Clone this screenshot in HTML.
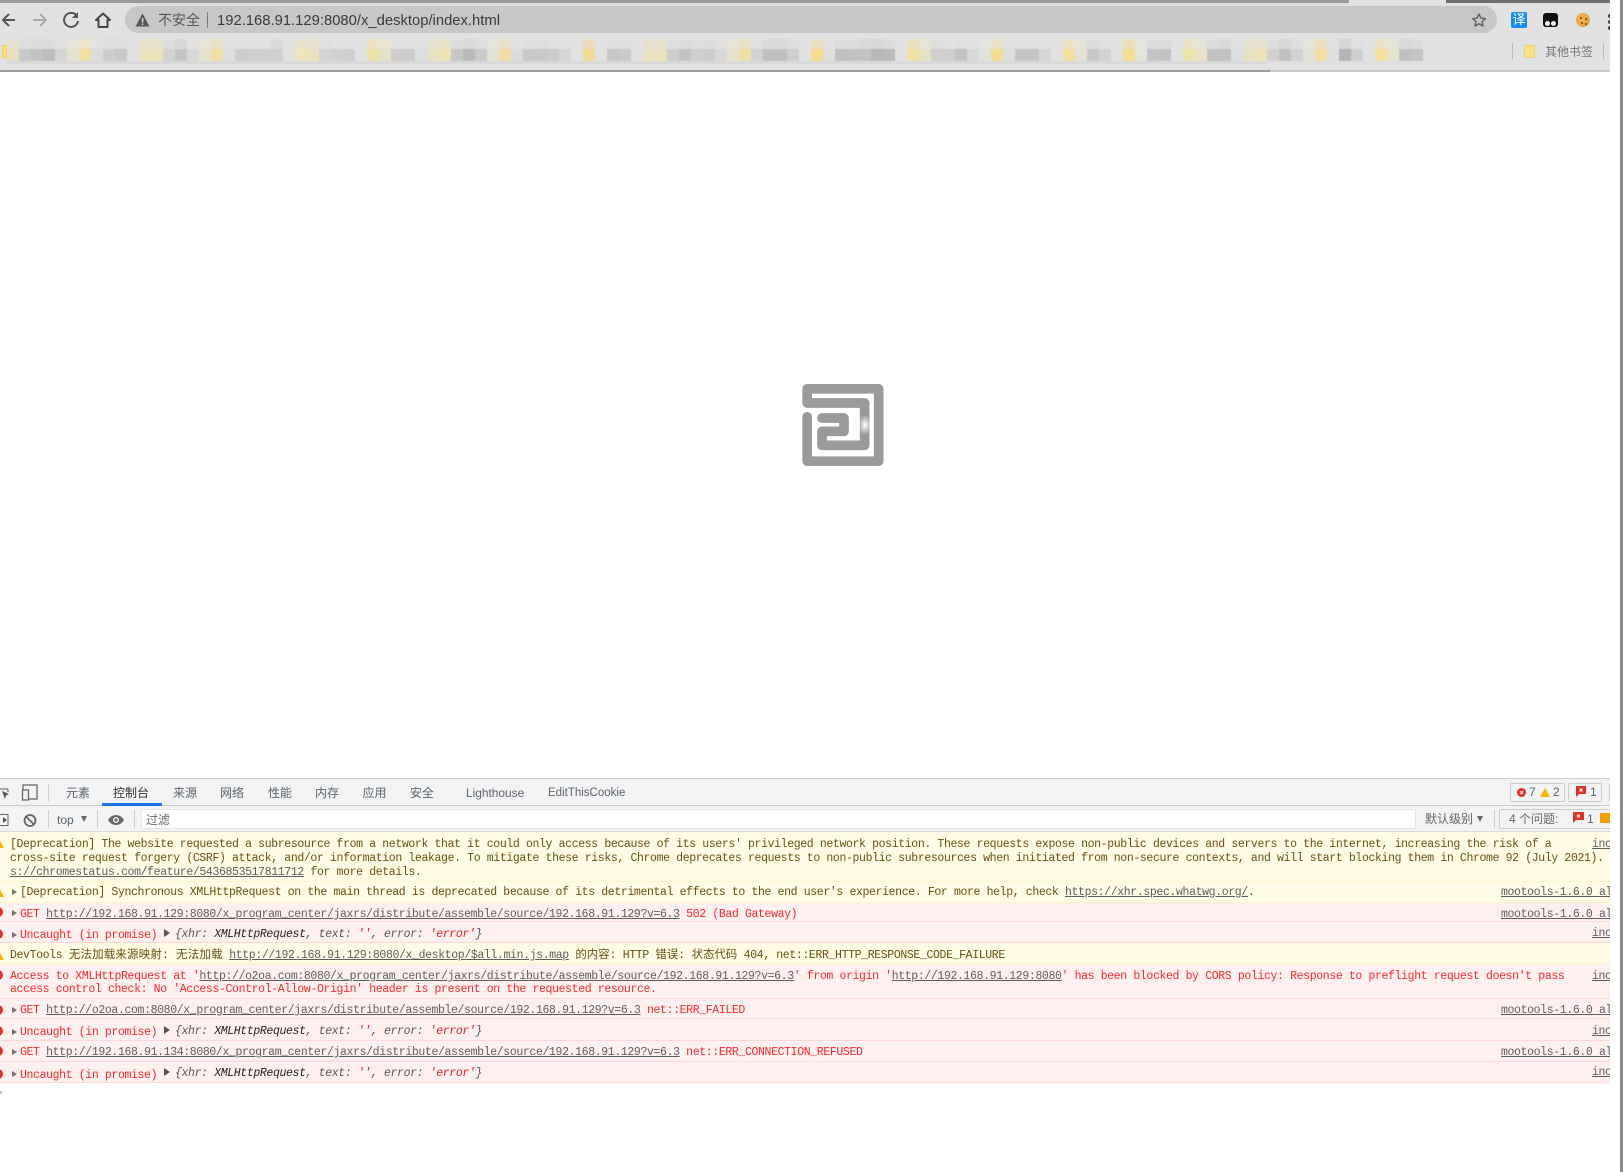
<!DOCTYPE html>
<html><head><meta charset="utf-8"><title>Console</title>
<style>
html,body{margin:0;padding:0;width:1623px;height:1172px;overflow:hidden;background:#fff}
body{position:relative;font-family:"Liberation Sans","Noto Sans CJK SC",sans-serif}
.a{position:absolute;white-space:nowrap}
.m{position:absolute;left:7px;display:flex;filter:blur(.4px)}
.m i{display:block;width:12px;height:100%;flex:none}
#wrap{position:absolute;left:0;top:0;width:1610px;height:1172px;overflow:hidden}
.r{position:absolute;left:0;width:1610px;box-sizing:border-box}
.w{background:#fffbe5;border-bottom:1px solid #fff3c4}
.e{background:#fff0f0;border-bottom:1px solid #ffd6d6}
.t{position:absolute;white-space:pre;font-family:"Liberation Mono","Noto Sans CJK SC",monospace;font-size:11.5px;letter-spacing:-.37px;line-height:14px;filter:blur(.3px)}
.y{color:#6a5010}.d{color:#f52a2a}
u{color:#5e5e5e}
.tab{position:absolute;top:785px;font-size:12px;line-height:16px;color:#5f6368;white-space:nowrap;filter:blur(.2px)}
.ar{position:absolute;width:0;height:0;border-left:5px solid #727272;border-top:3.5px solid transparent;border-bottom:3.5px solid transparent}
.ob{border-left:6px solid #555;border-top:4px solid transparent;border-bottom:4px solid transparent}
.i{font-style:italic;color:#555}.i b{font-weight:normal;color:#222}.i s{text-decoration:none;color:#e02020}
.c{position:absolute;width:10px;height:10px;border-radius:50%;background:#e0302a;left:-7px}
.tr{position:absolute;left:-6px;width:0;height:0;border-left:5px solid transparent;border-right:5px solid transparent;border-bottom:9px solid #f2b600}
</style></head><body>
<div id="wrap">
<!-- chrome -->
<div class="a" style="left:0;top:0;width:1610px;height:72px;background:#e2e2e2"></div>
<div class="a" style="left:0;top:0;width:1349px;height:3px;background:#9a9a9a"></div>
<div class="a" style="left:1446px;top:0;width:164px;height:3px;background:#6e6e6e"></div>
<div class="a" style="left:125px;top:6px;width:1372px;height:27px;border-radius:14px;background:#c7c7c7"></div>
<svg class="a" style="left:0;top:0" width="160" height="40" viewBox="0 0 160 40" fill="none">
<path d="M15 20H3M9 14l-6 6 6 6" stroke="#555" stroke-width="2"/>
<path d="M33 20H46M40 14l6 6-6 6" stroke="#aaa" stroke-width="2"/>
<path d="M76.5 15.5A7 7 0 1 0 78 21" stroke="#555" stroke-width="2"/><path d="M78 12v6h-6z" fill="#555"/>
<path d="M96 20L103 13.5 110 20H107.5V27H98.5V20Z" stroke="#444" stroke-width="2" stroke-linejoin="round"/>
<path d="M142.500 13.500L149.500 26.500H135.500Z" fill="#555"/><rect x="141.800" y="18" width="1.500" height="4.500" fill="#ddd"/><rect x="141.800" y="23.500" width="1.500" height="1.500" fill="#ddd"/>
</svg>
<div class="a" style="left:158px;top:11px;font-size:14px;line-height:18px;color:#555;filter:blur(.2px)">不安全</div>
<div class="a" style="left:207px;top:12px;width:1px;height:16px;background:#777"></div>
<div class="a" style="left:217px;top:11.500px;font-size:14.800px;line-height:18px;color:#3a3a3a;filter:blur(.2px)">192.168.91.129:8080/x_desktop/index.html</div>
<svg class="a" style="left:1470px;top:11px" width="18" height="18" viewBox="0 0 18 18"><path d="M9 3l1.900 4.100 4.500.5-3.300 3 .9 4.400L9 12.800l-4 2.200.9-4.400-3.300-3 4.500-.5z" fill="none" stroke="#666" stroke-width="1.500" stroke-linejoin="round"/></svg>
<div class="a" style="left:1511px;top:12px;width:16px;height:16px;border-radius:2px;background:#1a8cf5;color:#fff;font-size:13px;line-height:16px;text-align:center">译</div>
<div class="a" style="left:1543px;top:13px;width:15px;height:14px;border-radius:3px;background:#111"></div>
<div class="a" style="left:1545px;top:21px;width:5px;height:5px;border-radius:50%;background:#eee"></div>
<div class="a" style="left:1551px;top:21px;width:5px;height:5px;border-radius:50%;background:#eee"></div>
<div class="a" style="left:1576px;top:13px;width:14px;height:14px;border-radius:50%;background:radial-gradient(circle at 40% 40%,#f2b45a,#e39a36)"></div>
<div class="a" style="left:1580px;top:17px;width:2px;height:2px;background:#8a5a20;box-shadow:5px 1px #8a5a20,1px 5px #8a5a20,5px 6px #8a5a20"></div>
<div class="a" style="left:1608px;top:14px;width:4px;height:4px;border-radius:50%;background:#444;box-shadow:0 6px #444,0 12px #444"></div>
<!-- bookmarks -->
<div class="a" style="left:2px;top:45px;width:5px;height:13px;background:#fbe07c;border:1px solid #f2cd55;box-sizing:border-box"></div>
<div class="a" style="left:7px;top:61px;width:1260px;height:3px;background:#d8d8d8;filter:blur(.5px)"></div>
<div class="a" style="left:1267px;top:61px;width:180px;height:3px;background:#e0e0e0"></div>
<div class="m" style="top:39px;height:10px"><i style="background:#e6e2d0"></i><i style="background:#dedede"></i><i style="background:#dcdcdc"></i><i style="background:#dcdcd8"></i><i style="background:#e2e2e2"></i><i style="background:#e8e6d8"></i><i style="background:#ece4c4"></i><i style="background:#e2e2e2"></i><i style="background:#dedede"></i><i style="background:#dedede"></i><i style="background:#e2e2e2"></i><i style="background:#e8e2cc"></i><i style="background:#e8e2cc"></i><i style="background:#dedede"></i><i style="background:#d8d8d8"></i><i style="background:#e2e2e2"></i><i style="background:#e8e4d4"></i><i style="background:#eae2c4"></i><i style="background:#e2e2e2"></i><i style="background:#e2e2e2"></i><i style="background:#e2e2e2"></i><i style="background:#e2e2e2"></i><i style="background:#dadcda"></i><i style="background:#e2e2e2"></i><i style="background:#e8e2cc"></i><i style="background:#e8e2cc"></i><i style="background:#e0e0e0"></i><i style="background:#e2e2e2"></i><i style="background:#e2e2e2"></i><i style="background:#e2e2e2"></i><i style="background:#ece2c2"></i><i style="background:#e8e4d0"></i><i style="background:#e2e2e2"></i><i style="background:#e2e2e2"></i><i style="background:#e2e2e2"></i><i style="background:#e6e2d0"></i><i style="background:#e8e2c8"></i><i style="background:#dcdcdc"></i><i style="background:#dadada"></i><i style="background:#dedede"></i><i style="background:#e4e4dc"></i><i style="background:#eae2c8"></i><i style="background:#e2e2e2"></i><i style="background:#e0e0e0"></i><i style="background:#dedede"></i><i style="background:#e0e0e0"></i><i style="background:#e2e2e2"></i><i style="background:#e2e2e2"></i><i style="background:#ecdcb8"></i><i style="background:#e2e2e2"></i><i style="background:#dedede"></i><i style="background:#dedede"></i><i style="background:#e2e2e2"></i><i style="background:#e6e0cc"></i><i style="background:#e8e2cc"></i><i style="background:#dedede"></i><i style="background:#dcdcdc"></i><i style="background:#dedede"></i><i style="background:#dcdcdc"></i><i style="background:#e0e0e0"></i><i style="background:#e8e4d4"></i><i style="background:#eae2c4"></i><i style="background:#e0e0e0"></i><i style="background:#dadada"></i><i style="background:#dadada"></i><i style="background:#dedede"></i><i style="background:#e2e2e2"></i><i style="background:#ecdfbc"></i><i style="background:#e2e2e2"></i><i style="background:#dcdcdc"></i><i style="background:#dcdcdc"></i><i style="background:#dadad8"></i><i style="background:#d8d8d8"></i><i style="background:#dcdcdc"></i><i style="background:#e2e2e2"></i><i style="background:#ecdfbc"></i><i style="background:#e8e4d4"></i><i style="background:#dedede"></i><i style="background:#e2e2e2"></i><i style="background:#e0e0e0"></i><i style="background:#e2e2e2"></i><i style="background:#e4e4e0"></i><i style="background:#ece2c4"></i><i style="background:#e2e2e2"></i><i style="background:#e0e0e0"></i><i style="background:#e0e0e0"></i><i style="background:#e2e2e2"></i><i style="background:#e2e2e2"></i><i style="background:#ece2c4"></i><i style="background:#e6e4d8"></i><i style="background:#dcdcdc"></i><i style="background:#e0e0e0"></i><i style="background:#e2e2e2"></i><i style="background:#ecdfbc"></i><i style="background:#e4e4de"></i><i style="background:#dcdcdc"></i><i style="background:#dcdcdc"></i><i style="background:#e2e2e2"></i><i style="background:#ece2c8"></i><i style="background:#e6e4d4"></i><i style="background:#dcdcdc"></i><i style="background:#dadada"></i><i style="background:#e2e2e2"></i><i style="background:#e6e2d0"></i><i style="background:#e8e2cc"></i><i style="background:#dedede"></i><i style="background:#d8d8d8"></i><i style="background:#dedede"></i><i style="background:#e6e4dc"></i><i style="background:#ecdfbc"></i><i style="background:#e2e2e2"></i><i style="background:#d6d6d6"></i><i style="background:#e0e0e0"></i><i style="background:#e2e2e2"></i><i style="background:#ece2c4"></i><i style="background:#e6e4d4"></i><i style="background:#dadada"></i><i style="background:#dcdcdc"></i></div>
<div class="m" style="top:49px;height:12px"><i style="background:#e8e0c0"></i><i style="background:#c8c8c8"></i><i style="background:#c2c2c2"></i><i style="background:#bcbcb8"></i><i style="background:#d4d6d6"></i><i style="background:#e4e2d4"></i><i style="background:#f2dfa4"></i><i style="background:#dcdcdc"></i><i style="background:#cdcdcb"></i><i style="background:#c6c7c8"></i><i style="background:#e2e2e2"></i><i style="background:#eee2bf"></i><i style="background:#eee2bf"></i><i style="background:#d2d2d0"></i><i style="background:#c4c4c0"></i><i style="background:#d6d8da"></i><i style="background:#e8e4cc"></i><i style="background:#f2dfa4"></i><i style="background:#dedede"></i><i style="background:#cccccc"></i><i style="background:#cdcfcd"></i><i style="background:#d0cecd"></i><i style="background:#cfd0d2"></i><i style="background:#e2e2e2"></i><i style="background:#f0e4bc"></i><i style="background:#ece2bc"></i><i style="background:#d4d4d2"></i><i style="background:#d0d2d2"></i><i style="background:#cecece"></i><i style="background:#e2e2e2"></i><i style="background:#f0e0ac"></i><i style="background:#e6e2c8"></i><i style="background:#cecdcb"></i><i style="background:#cbcbc9"></i><i style="background:#dcdee0"></i><i style="background:#e8e2c4"></i><i style="background:#eee4b4"></i><i style="background:#c6c6c6"></i><i style="background:#bab9b6"></i><i style="background:#c9cacc"></i><i style="background:#e4e2d4"></i><i style="background:#f2dea0"></i><i style="background:#dcdcdc"></i><i style="background:#c8c8c6"></i><i style="background:#c6c8ca"></i><i style="background:#cdcbc8"></i><i style="background:#d4d6d8"></i><i style="background:#e2e2e2"></i><i style="background:#f4dc94"></i><i style="background:#e4e2dc"></i><i style="background:#c6c6c6"></i><i style="background:#cacaca"></i><i style="background:#e2e2e2"></i><i style="background:#ece2c0"></i><i style="background:#ece2bc"></i><i style="background:#cdcdcb"></i><i style="background:#c2c2c2"></i><i style="background:#cecece"></i><i style="background:#cbcbc8"></i><i style="background:#d8d8da"></i><i style="background:#e8e4cc"></i><i style="background:#f0e0a8"></i><i style="background:#d2d2ce"></i><i style="background:#bebebe"></i><i style="background:#bebebe"></i><i style="background:#cdced0"></i><i style="background:#e2e2e2"></i><i style="background:#f6dc90"></i><i style="background:#e0dedc"></i><i style="background:#c0bfbe"></i><i style="background:#c2c1c2"></i><i style="background:#c4c2c0"></i><i style="background:#b8b8b8"></i><i style="background:#b8babc"></i><i style="background:#e2e2e2"></i><i style="background:#f2e0a4"></i><i style="background:#e8e2c4"></i><i style="background:#d0cecc"></i><i style="background:#ced0d0"></i><i style="background:#c2c2c2"></i><i style="background:#d8d8d8"></i><i style="background:#e2e2dc"></i><i style="background:#f4dc94"></i><i style="background:#dedede"></i><i style="background:#c4c4c4"></i><i style="background:#c4c4c4"></i><i style="background:#d4d6d8"></i><i style="background:#e2e2e2"></i><i style="background:#f4dea0"></i><i style="background:#e4e2d4"></i><i style="background:#c8c6c4"></i><i style="background:#d0d2d4"></i><i style="background:#e2e2e2"></i><i style="background:#f6dc94"></i><i style="background:#e4e4da"></i><i style="background:#c4c4c4"></i><i style="background:#c2c2c2"></i><i style="background:#e2e2e2"></i><i style="background:#f0e2ac"></i><i style="background:#ece2c8"></i><i style="background:#c2c0c0"></i><i style="background:#c2c0c0"></i><i style="background:#dce0e2"></i><i style="background:#e8e2c4"></i><i style="background:#eee2b8"></i><i style="background:#d2d0cc"></i><i style="background:#c0c0c0"></i><i style="background:#d0d2d4"></i><i style="background:#e4e2d8"></i><i style="background:#f2e0a0"></i><i style="background:#e0dedc"></i><i style="background:#b4b4b4"></i><i style="background:#ccced0"></i><i style="background:#e2e2e2"></i><i style="background:#f4e0a0"></i><i style="background:#e6e4d0"></i><i style="background:#c0c0c0"></i><i style="background:#c4c4c4"></i></div>
<div class="a" style="left:1512px;top:43px;width:1px;height:16px;background:#bbb"></div>
<div class="a" style="left:1524px;top:45px;width:11px;height:13px;background:#fbe08c;border:1px solid #f2d070;box-sizing:border-box;border-radius:1px"></div>
<div class="a" style="left:1545px;top:44px;font-size:12px;line-height:16px;color:#777;filter:blur(.2px)">其他书签</div>
<div class="a" style="left:1603px;top:43px;width:1px;height:16px;background:#bbb"></div>
<div class="a" style="left:0;top:70px;width:1610px;height:2px;background:#c8c8c8"></div>
<div class="a" style="left:0;top:69.500px;width:1270px;height:2.500px;background:#9c9c9c"></div>
<!-- logo -->
<svg class="a" style="left:780px;top:370px" width="120" height="110" viewBox="0 0 360 330" fill="none">
<defs><radialGradient id="g"><stop offset="0" stop-color="#fff"/><stop offset="1" stop-color="#fff" stop-opacity="0"/></radialGradient></defs>
<path d="M81.500 140V273.500H296V56.500H81.500V99H254V226H126V184H192V144H126" stroke="#9a9a9a" stroke-width="29" stroke-linecap="round" stroke-linejoin="round"/>
<ellipse cx="255" cy="165" rx="20" ry="30" fill="url(#g)"/>
</svg>
<!-- devtools tabs -->
<div class="a" style="left:0;top:778px;width:1610px;height:28px;background:#f1f3f4;border-top:1px solid #ccc;border-bottom:1px solid #ccc;box-sizing:border-box"></div>
<svg class="a" style="left:0;top:783px" width="40" height="18" viewBox="0 0 40 18" fill="none">
<path d="M0 6h8M8 6v3" stroke="#777" stroke-width="1.200"/><path d="M2 8l7 3-3 1.500L5 16z" fill="#555"/>
<rect x="23" y="2" width="14" height="14" stroke="#666" stroke-width="1.300"/><rect x="22.500" y="7" width="6" height="10" fill="#f1f3f4" stroke="#666" stroke-width="1.300"/>
</svg>
<div class="a" style="left:48px;top:784px;width:1px;height:17px;background:#ccc"></div>
<div class="tab" style="left:66px">元素</div>
<div class="tab" style="left:113px;color:#333">控制台</div>
<div class="tab" style="left:173px">来源</div>
<div class="tab" style="left:220px">网络</div>
<div class="tab" style="left:268px">性能</div>
<div class="tab" style="left:315px">内存</div>
<div class="tab" style="left:362.500px">应用</div>
<div class="tab" style="left:410px">安全</div>
<div class="tab" style="left:466px;font-size:11.900px">Lighthouse</div>
<div class="tab" style="left:548px;font-size:11.500px">EditThisCookie</div>
<div class="a" style="left:102px;top:803px;width:60px;height:3px;background:#1a73e8"></div>
<div class="a" style="left:1510px;top:783px;width:55px;height:19px;border:1px solid #ccc;box-sizing:border-box;border-radius:2px"></div>
<div class="a" style="left:1568px;top:783px;width:34px;height:19px;border:1px solid #ccc;box-sizing:border-box;border-radius:2px"></div>
<svg class="a" style="left:1517px;top:788px" width="9" height="9" viewBox="0 0 9 9"><circle cx="4.500" cy="4.500" r="4.500" fill="#e0302a"/><path d="M3 3l3 3M6 3l-3 3" stroke="#fff" stroke-width="1"/></svg>
<div class="tab" style="left:1529px;top:784px;font-size:12px">7</div>
<div class="a" style="left:1540px;top:788px;width:0;height:0;border-left:5px solid transparent;border-right:5px solid transparent;border-bottom:9px solid #f2b600"></div>
<div class="tab" style="left:1553px;top:784px;font-size:12px">2</div>
<svg class="a" style="left:1576px;top:786px" width="10" height="11" viewBox="0 0 10 11"><path d="M0 0H10V8H3L0 11Z" fill="#e0302a"/><path d="M3.500 2.500l3 3M6.500 2.500l-3 3" stroke="#fff" stroke-width="1"/></svg>
<div class="tab" style="left:1590px;top:784px;font-size:12px">1</div>
<div class="a" style="left:1609px;top:784px;width:1px;height:17px;background:#ccc"></div>
<!-- toolbar -->
<div class="a" style="left:0;top:806px;width:1610px;height:26px;background:#f1f3f4;border-bottom:1px solid #d8d8d8;box-sizing:border-box"></div>
<svg class="a" style="left:0;top:811px" width="140" height="18" viewBox="0 0 140 18" fill="none">
<rect x="-3" y="3.500" width="11" height="11" stroke="#666"/><path d="M3 6l4 3-4 3z" fill="#555"/>
<circle cx="30" cy="9.500" r="5.500" stroke="#666" stroke-width="1.800"/><path d="M26 5.500l8 8" stroke="#666" stroke-width="1.800"/>
<path d="M108 9c2-3.300 4.700-5 8-5s6 1.700 8 5c-2 3.300-4.700 5-8 5s-6-1.700-8-5z" fill="#666"/><circle cx="116" cy="9" r="3" fill="#f1f3f4"/><circle cx="116" cy="9" r="1.600" fill="#666"/>
</svg>
<div class="a" style="left:48px;top:810px;width:1px;height:18px;background:#ccc"></div>
<div class="tab" style="left:57px;top:812px;font-size:12px">top</div>
<div class="a" style="left:81px;top:816px;width:0;height:0;border-left:3.500px solid transparent;border-right:3.500px solid transparent;border-top:6px solid #666"></div>
<div class="a" style="left:97px;top:810px;width:1px;height:18px;background:#ccc"></div>
<div class="a" style="left:134px;top:810px;width:1px;height:18px;background:#ccc"></div>
<div class="a" style="left:141px;top:809px;width:1275px;height:20px;background:#fff;border:1px solid #e6e6e6;box-sizing:border-box"></div>
<div class="tab" style="left:146px;top:812px;color:#666">过滤</div>
<div class="tab" style="left:1425px;top:811px;color:#666">默认级别</div>
<div class="a" style="left:1477px;top:816px;width:0;height:0;border-left:3.500px solid transparent;border-right:3.500px solid transparent;border-top:6px solid #666"></div>
<div class="a" style="left:1494px;top:810px;width:1px;height:18px;background:#ccc"></div>
<div class="a" style="left:1499px;top:809px;width:120px;height:20px;border:1px solid #ccc;box-sizing:border-box;border-radius:2px"></div>
<div class="tab" style="left:1509px;top:811px;color:#666">4 个问题:</div>
<svg class="a" style="left:1573px;top:812px" width="11" height="11" viewBox="0 0 11 11"><path d="M0 0H11V8H3L0 11Z" fill="#e0302a"/><path d="M4 2.500l3 3M7 2.500l-3 3" stroke="#fff" stroke-width="1"/></svg>
<div class="tab" style="left:1587px;top:811px">1</div>
<div class="a" style="left:1600px;top:813px;width:11px;height:10px;background:#f2a000"></div>
<!-- rows -->
<div class="r w" style="top:832px;height:50px"></div>
<div class="r w" style="top:882px;height:21px"></div>
<div class="r e" style="top:903px;height:19px"></div>
<div class="r e" style="top:922px;height:21px"></div>
<div class="r w" style="top:943px;height:21px"></div>
<div class="r e" style="top:964px;height:35px"></div>
<div class="r e" style="top:999px;height:20px"></div>
<div class="r e" style="top:1019px;height:22px"></div>
<div class="r e" style="top:1041px;height:21px"></div>
<div class="r e" style="top:1062px;height:21px"></div>
<div class="tr" style="top:839px"></div><div class="tr" style="top:888px"></div><div class="tr" style="top:951px"></div>
<div class="c" style="top:907px"></div><div class="c" style="top:929px"></div><div class="c" style="top:970px"></div><div class="c" style="top:1005px"></div><div class="c" style="top:1026px"></div><div class="c" style="top:1046px"></div><div class="c" style="top:1069px"></div>
<div class="ar" style="left:12px;top:889px"></div><div class="ar" style="left:12px;top:910px"></div><div class="ar" style="left:12px;top:932px"></div><div class="ar" style="left:12px;top:1007px"></div><div class="ar" style="left:12px;top:1029px"></div><div class="ar" style="left:12px;top:1049px"></div><div class="ar" style="left:12px;top:1071px"></div>
<div class="ar ob" style="left:164px;top:929px"></div><div class="ar ob" style="left:164px;top:1026px"></div><div class="ar ob" style="left:164px;top:1068px"></div>

<div class="t y" style="left:10px;top:838px">[Deprecation] The website requested a subresource from a network that it could only access because of its users' privileged network position. These requests expose non-public devices and servers to the internet, increasing the risk of a</div>
<div class="t y" style="left:10px;top:852px">cross-site request forgery (CSRF) attack, and/or information leakage. To mitigate these risks, Chrome deprecates requests to non-public subresources when initiated from non-secure contexts, and will start blocking them in Chrome 92 (July 2021).</div>
<div class="t y" style="left:10px;top:866px"><u>s://chromestatus.com/feature/5436853517811712</u> for more details.</div>
<div class="t" style="left:1592px;top:838px"><u>inc</u></div>

<div class="t y" style="left:20px;top:886px">[Deprecation] Synchronous XMLHttpRequest on the main thread is deprecated because of its detrimental effects to the end user's experience. For more help, check <u>https://xhr.spec.whatwg.org/</u>.</div>
<div class="t" style="left:1501px;top:886px"><u>mootools-1.6.0 al</u></div>

<div class="t d" style="left:20px;top:908px">GET <u>http://192.168.91.129:8080/x_program_center/jaxrs/distribute/assemble/source/192.168.91.129?v=6.3</u> 502 (Bad Gateway)</div>
<div class="t" style="left:1501px;top:908px"><u>mootools-1.6.0 al</u></div>

<div class="t d" style="left:20px;top:929px">Uncaught (in promise)</div>
<div class="t i" style="left:175px;top:928px">{xhr: <b>XMLHttpRequest</b>, text: <s>''</s>, error: <s>'error'</s>}</div>
<div class="t" style="left:1592px;top:927px"><u>inc</u></div>

<div class="t y" style="left:10px;top:949px">DevTools <span style="letter-spacing:.15px">无法加载来源映射: 无法加载</span> <u>http://192.168.91.129:8080/x_desktop/$all.min.js.map</u> <span style="letter-spacing:-.14px">的内容:</span> HTTP <span style="letter-spacing:-.14px">错误: 状态代码</span> 404, net::ERR_HTTP_RESPONSE_CODE_FAILURE</div>

<div class="t d" style="left:10px;top:970px">Access to XMLHttpRequest at '<u>http://o2oa.com:8080/x_program_center/jaxrs/distribute/assemble/source/192.168.91.129?v=6.3</u>' from origin '<u>http://192.168.91.129:8080</u>' has been blocked by CORS policy: Response to preflight request doesn't pass</div>
<div class="t d" style="left:10px;top:983px">access control check: No 'Access-Control-Allow-Origin' header is present on the requested resource.</div>
<div class="t" style="left:1592px;top:970px"><u>inc</u></div>

<div class="t d" style="left:20px;top:1004px">GET <u>http://o2oa.com:8080/x_program_center/jaxrs/distribute/assemble/source/192.168.91.129?v=6.3</u> net::ERR_FAILED</div>
<div class="t" style="left:1501px;top:1004px"><u>mootools-1.6.0 al</u></div>

<div class="t d" style="left:20px;top:1026px">Uncaught (in promise)</div>
<div class="t i" style="left:175px;top:1025px">{xhr: <b>XMLHttpRequest</b>, text: <s>''</s>, error: <s>'error'</s>}</div>
<div class="t" style="left:1592px;top:1025px"><u>inc</u></div>

<div class="t d" style="left:20px;top:1046px">GET <u>http://192.168.91.134:8080/x_program_center/jaxrs/distribute/assemble/source/192.168.91.129?v=6.3</u> net::ERR_CONNECTION_REFUSED</div>
<div class="t" style="left:1501px;top:1046px"><u>mootools-1.6.0 al</u></div>

<div class="t d" style="left:20px;top:1069px">Uncaught (in promise)</div>
<div class="t i" style="left:175px;top:1067px">{xhr: <b>XMLHttpRequest</b>, text: <s>''</s>, error: <s>'error'</s>}</div>
<div class="t" style="left:1592px;top:1066px"><u>inc</u></div>
<div class="a" style="left:0;top:1091px;width:2px;height:3px;background:#b8c8d8"></div>
</div>
<div class="a" style="left:1620px;top:0;width:3px;height:1172px;background:#8a8a8a"></div>
</body></html>
